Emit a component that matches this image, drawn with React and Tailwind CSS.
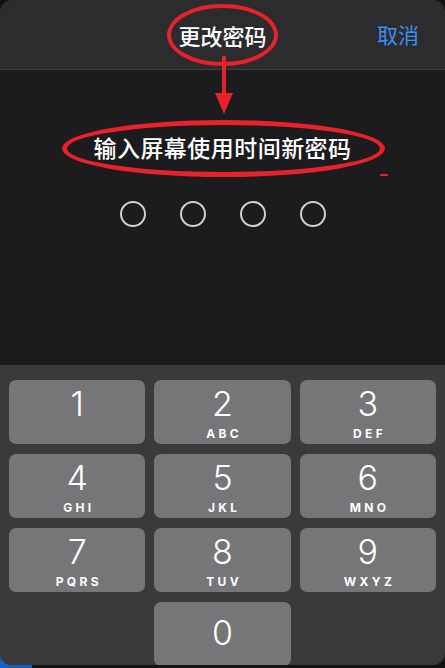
import React from 'react';

const KEYS = [
    { d: '1', l: '' },
    { d: '2', l: 'ABC' },
    { d: '3', l: 'DEF' },
    { d: '4', l: 'GHI' },
    { d: '5', l: 'JKL' },
    { d: '6', l: 'MNO' },
    { d: '7', l: 'PQRS' },
    { d: '8', l: 'TUV' },
    { d: '9', l: 'WXYZ' },
];

const cjk = { fontFamily: '"Noto Sans CJK SC", "Noto Sans", sans-serif' };
const num = { fontFamily: 'Inter, "Liberation Sans", sans-serif' };

const Key = ({ d, l }) => (
    <div className="h-[64px] rounded-[7px] bg-[#767678] flex flex-col items-center pt-[7px] text-white" style={num}>
        <span className="text-[34px] font-light leading-[34px]">{d}</span>
        {l && <span className="mt-[7px] text-[12px] font-bold tracking-[0.28em] leading-none pl-[0.28em]">{l}</span>}
    </div>
);

export default function App() {
    return (
        <div className="relative w-[445px] h-[668px] bg-[#121212] overflow-hidden">
            {/* blue corner peeking behind the sheet */}
            <div className="absolute left-0 bottom-0 w-[32px] h-[20px] bg-[#1560c0]" />

            <div className="relative h-[665px] rounded-[12px] overflow-hidden flex flex-col bg-[#1c1c1e]" style={cjk}>
                {/* Header */}
                <div className="h-[70px] shrink-0 bg-[#2c2c2e] border-b border-[#3e3e40] grid grid-cols-[1fr_auto_1fr] items-center">
                    <div />
                    <div className="relative text-white text-[22px] font-medium leading-none">
                        更改密码
                        <div className="absolute left-[-11px] right-[-11px] top-[-20px] bottom-[-20px] rounded-[50%] border-[4px] border-[#e8222b]" />
                    </div>
                    <div className="flex justify-end pr-[26px] text-[#3f8ef5] text-[21px] leading-none">取消</div>
                </div>

                {/* Content */}
                <div className="relative flex-1 flex flex-col items-center pt-[62px]">
                    <svg className="absolute left-[213px] top-[-14px]" width="22" height="58" viewBox="0 0 22 58">
                        <rect x="9" y="0" width="4" height="40" fill="#e8222b" />
                        <polygon points="2,37 20,37 11,58" fill="#e8222b" />
                    </svg>

                    <div className="relative text-white text-[23px] font-medium leading-[30px] tracking-[0.02em]">
                        输入屏幕使用时间新密码
                        <div className="absolute left-[-31px] right-[-33px] top-[-12px] bottom-[-15px] rounded-[50%] border-[5px] border-[#e8222b]" />
                    </div>
                    <div className="absolute left-[380px] top-[104px] w-[8px] h-[2px] rounded-full bg-[#e8222b]" />

                    <div className="mt-[39px] flex gap-[34px]">
                        {[0, 1, 2, 3].map(i => (
                            <div key={i} className="w-[26px] h-[26px] rounded-full border-[2px] border-[#d0d0d0]" />
                        ))}
                    </div>
                </div>

                {/* Keypad */}
                <div className="h-[300px] shrink-0 bg-[#3a3a3c] pt-[15px] px-[9px] grid grid-cols-3 auto-rows-[64px] gap-x-[9px] gap-y-[10px]">
                    {KEYS.map(k => <Key key={k.d} {...k} />)}
                    <div />
                    <div className="h-[64px] rounded-[7px] bg-[#767678] flex items-center justify-center text-white text-[34px] font-light leading-none pb-[2px]" style={num}>0</div>
                    <div />
                </div>
            </div>
        </div>
    );
}
